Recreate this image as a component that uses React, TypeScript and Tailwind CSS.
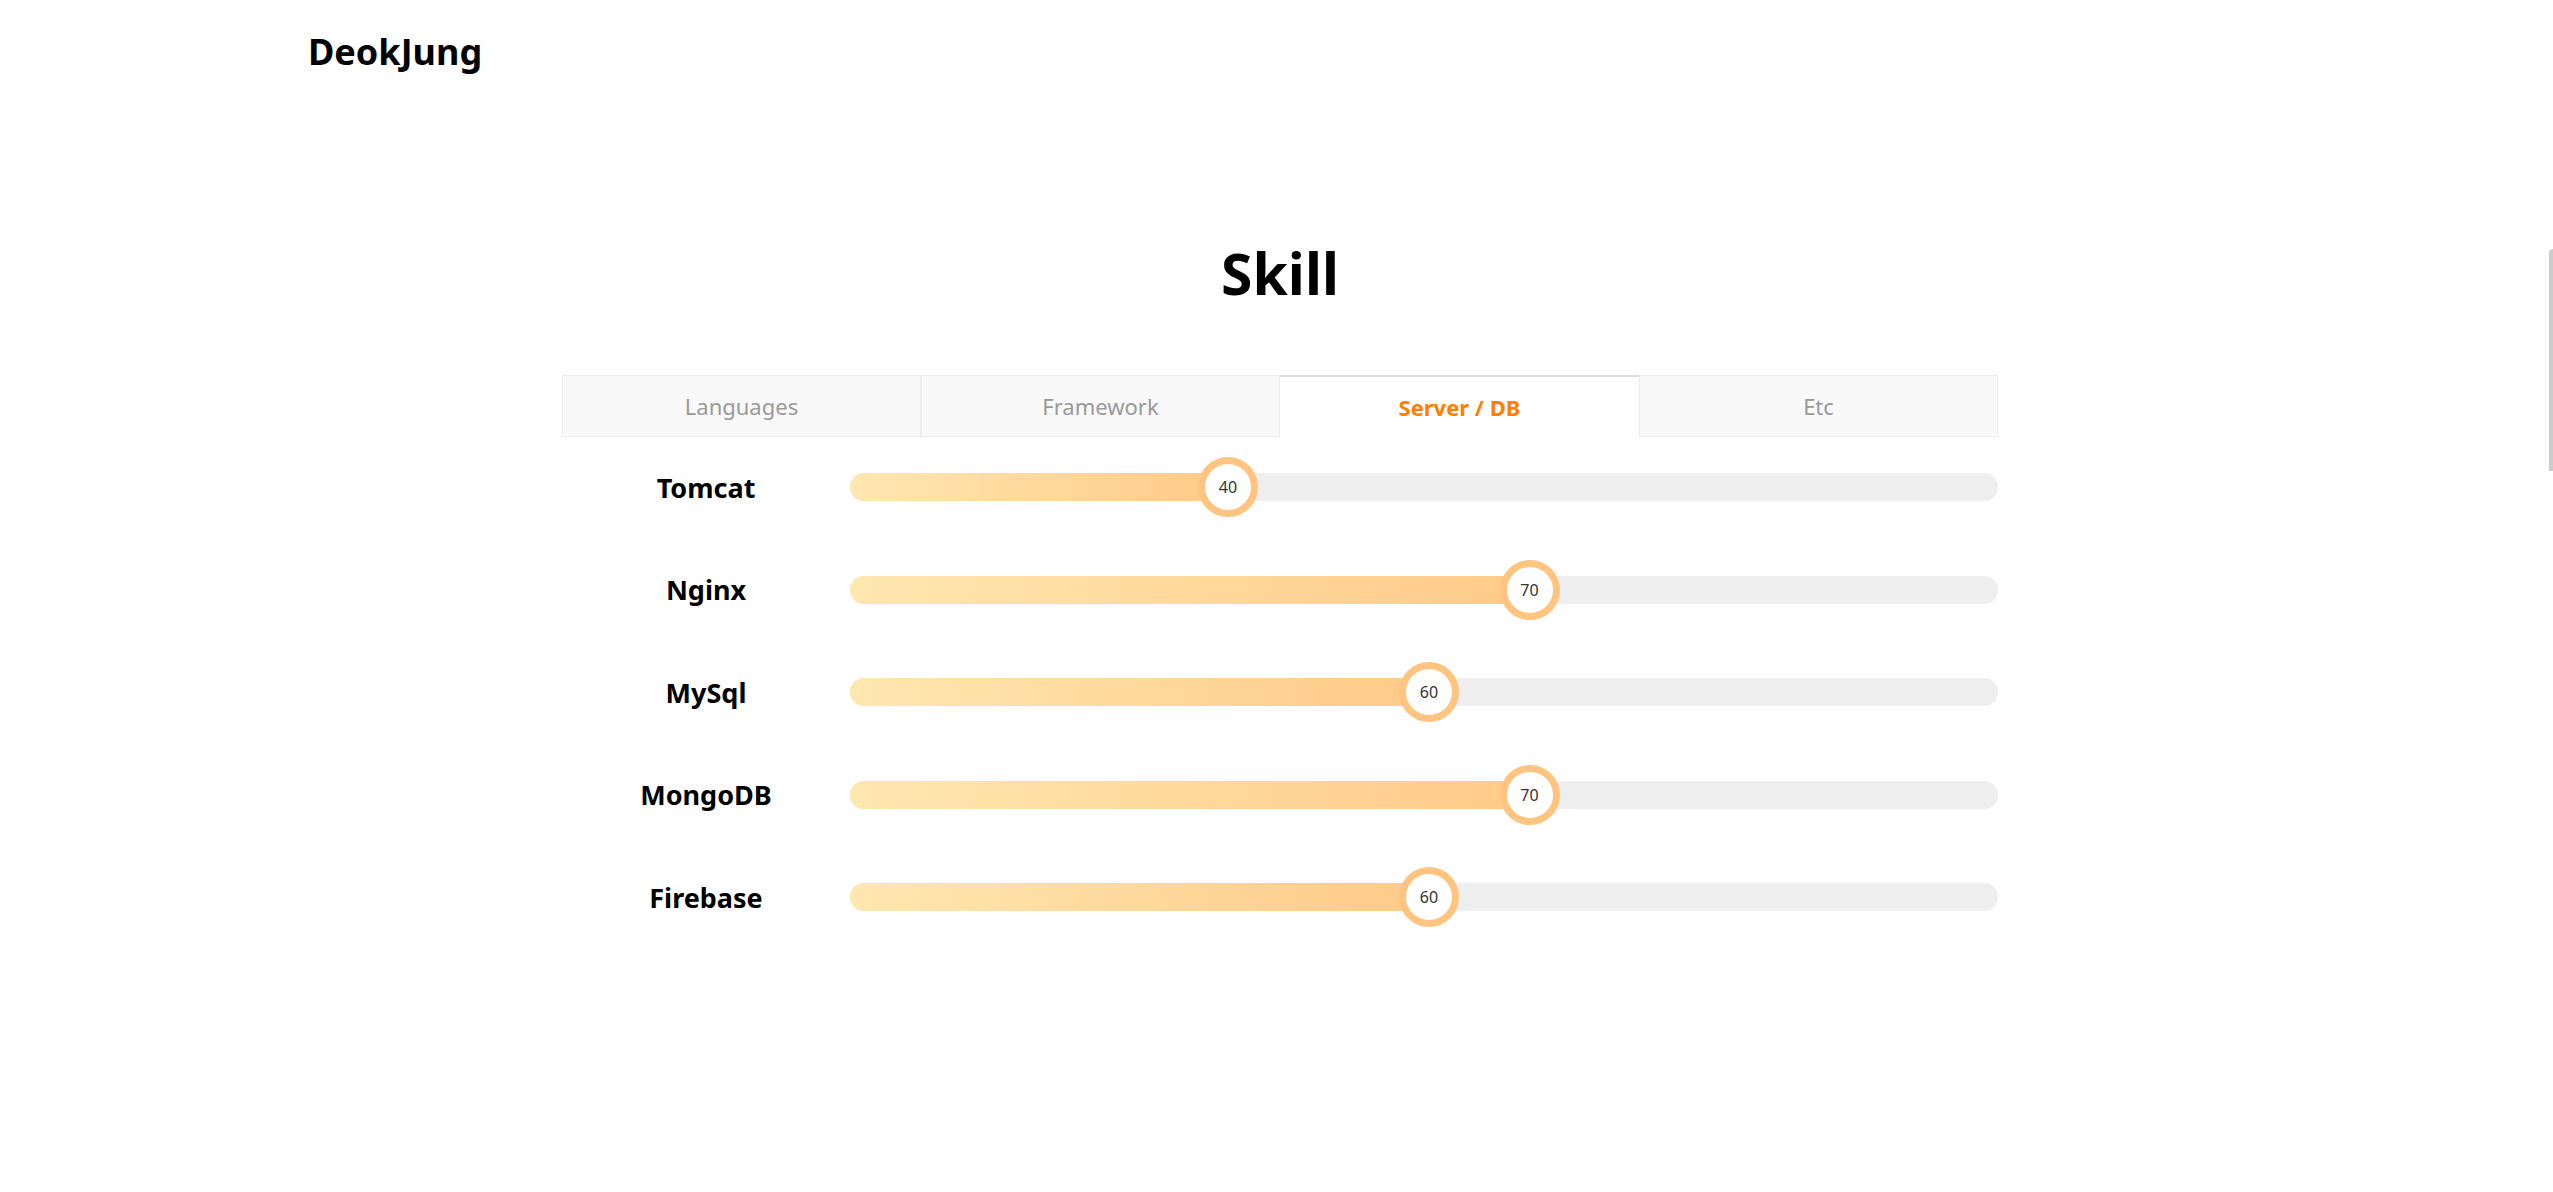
import React, { useState } from "react";

const tabs = ["Languages", "Framework", "Server / DB", "Etc"];

const skills = [
  { name: "Tomcat", value: 40 },
  { name: "Nginx", value: 70 },
  { name: "MySql", value: 60 },
  { name: "MongoDB", value: 70 },
  { name: "Firebase", value: 60 },
];

function SkillBar({ name, value }: { name: string; value: number }) {
  // thumb centre sits about 10px per point from the track start
  const pct = ((value * 10.05 - 24) / 1148) * 100;
  return (
    <div className="flex items-center h-[60px]">
      <div className="w-[288px] text-center text-[27px] font-bold text-black leading-none">
        {name}
      </div>
      <div className="relative flex-1 h-[28px] rounded-full bg-[#eeeeee]">
        <div
          className="absolute left-0 top-0 h-full rounded-l-full bg-gradient-to-r from-[#ffe7b0] to-[#ffca88]"
          style={{ width: `${pct}%` }}
        />
        <div
          className="absolute top-1/2 -translate-x-1/2 -translate-y-1/2 w-[60px] h-[60px] rounded-full bg-white border-[7px] border-[#ffc580] flex items-center justify-center text-[16px] text-[#333]"
          style={{ left: `${pct}%` }}
        >
          {value}
        </div>
      </div>
    </div>
  );
}

export default function App() {
  const [active, setActive] = useState(2);

  return (
    <div className="min-h-screen bg-white font-['Noto_Sans',sans-serif]">
      <header className="pt-[34px] pl-[308px]">
        <h1 className="text-[36px] font-bold leading-none text-black">DeokJung</h1>
      </header>

      <main className="pl-[7px]">
        <div className="mx-auto w-[1436px]">
          <h2 className="mt-[175px] text-center text-[57px] font-bold leading-none text-black">
            Skill
          </h2>

          <div className="mt-[73px] grid grid-cols-4 h-[62px]">
            {tabs.map((t, i) => (
              <button
                key={t}
                onClick={() => setActive(i)}
                className={
                  i === active
                    ? "bg-white border-t-2 border-[#dddddd] text-[22px] font-bold text-[#ff7f00]"
                    : "bg-[#f9f9f9] border border-[#ececec] text-[22px] text-[#999999]"
                }
              >
                {t}
              </button>
            ))}
          </div>

          <div className="mt-[20px] flex flex-col gap-[42.6px]">
            {skills.map((s) => (
              <SkillBar key={s.name} name={s.name} value={s.value} />
            ))}
          </div>
        </div>
      </main>

      <div className="fixed right-0 top-[249px] w-[4px] h-[222px] rounded-tl-full bg-[#cccccc]" />
    </div>
  );
}
